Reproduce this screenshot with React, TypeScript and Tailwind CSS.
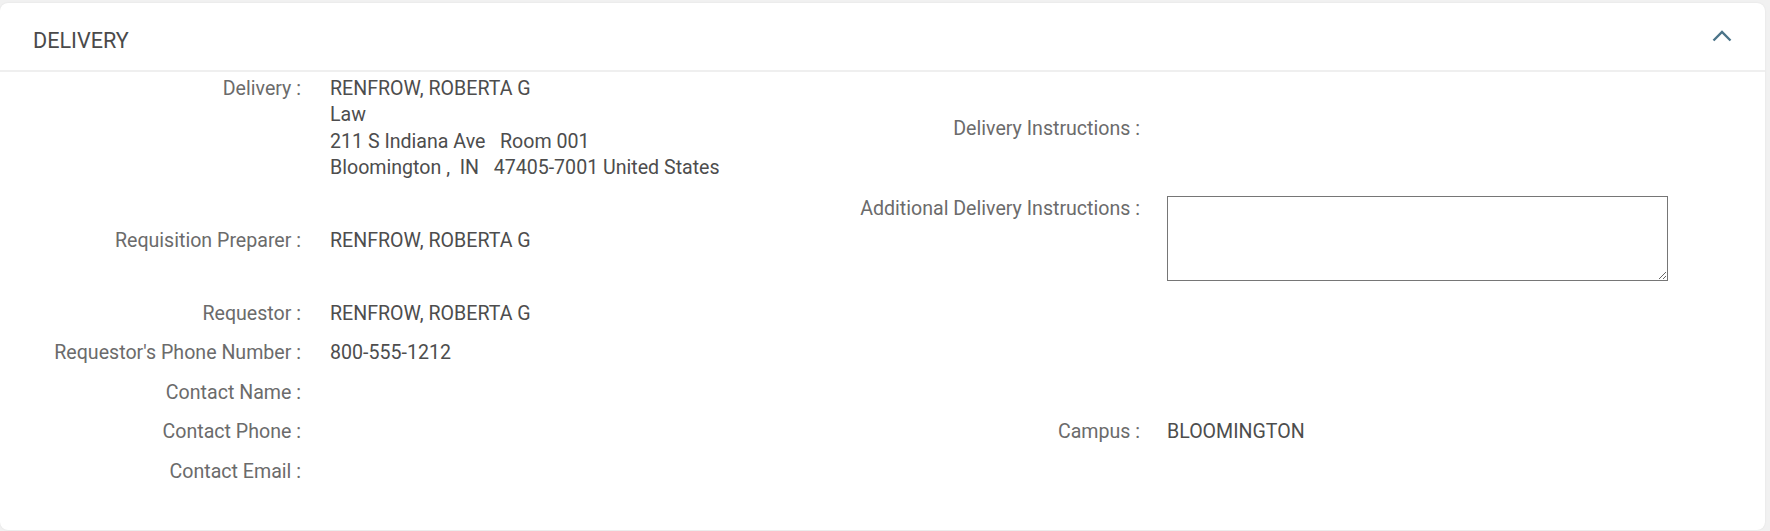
import React from "react";

const font = { fontFamily: "Roboto, 'Liberation Sans', sans-serif" };

function Label({ children, w }: { children?: React.ReactNode; w: string }) {
  return <div className={`${w} shrink-0 text-right text-[#6b6b6b]`}>{children}</div>;
}

export default function App() {
  return (
    <div
      className="w-[1770px] h-[531px] bg-[#f1f1f1] pt-[3px] pr-[5px] pb-[1px] overflow-hidden"
      style={font}
    >
      <div className="h-full bg-white rounded-[8px] shadow-[0_0_2px_rgba(0,0,0,0.08)] text-[19.6px] leading-[26.4px]">
        {/* header */}
        <div className="h-[69px] flex items-start justify-between border-b-2 border-[#efefef]">
          <div className="pt-[25px] pl-[33px] text-[21.6px] leading-[26px] text-[#4a4a4a]">DELIVERY</div>
          <div className="pt-[27px] pr-[33px]">
            <svg width="20" height="12" viewBox="0 0 20 12" fill="none">
              <path d="M1.5 10.5 L10 2 L18.5 10.5" stroke="#4b7489" strokeWidth="2.4" />
            </svg>
          </div>
        </div>

        {/* row 1 */}
        <div className="flex h-[116px] pt-[4px]">
          <div className="w-[838px] flex">
            <Label w="w-[301px]">Delivery :</Label>
            <div className="pl-[29px] text-[#4d4d4d]">
              <div>RENFROW, ROBERTA G</div>
              <div>Law</div>
              <div className="whitespace-pre">211 S Indiana Ave   Room 001</div>
              <div className="whitespace-pre">Bloomington ,  IN   47405-7001 United States</div>
            </div>
          </div>
          <div className="flex items-center h-[106px]">
            <Label w="w-[302px]">Delivery Instructions :</Label>
          </div>
        </div>

        {/* row 2 */}
        <div className="flex h-[106px]">
          <div className="w-[838px] flex items-center">
            <Label w="w-[301px]">Requisition Preparer :</Label>
            <div className="pl-[29px] text-[#4d4d4d]">RENFROW, ROBERTA G</div>
          </div>
          <div className="flex pt-[8px]">
            <Label w="w-[302px]">Additional Delivery Instructions :</Label>
            <textarea className="ml-[27px] w-[501px] h-[85px] border border-[#767676] bg-white outline-none" />
          </div>
        </div>

        {/* simple rows */}
        {[
          ["Requestor :", "RENFROW, ROBERTA G", "", ""],
          ["Requestor's Phone Number :", "800-555-1212", "", ""],
          ["Contact Name :", "", "", ""],
          ["Contact Phone :", "", "Campus :", "BLOOMINGTON"],
          ["Contact Email :", "", "", ""],
        ].map(([l, v, rl, rv], i) => (
          <div key={i} className="flex h-[39.5px] items-center">
            <div className="w-[838px] flex">
              <Label w="w-[301px]">{l}</Label>
              <div className="pl-[29px] text-[#4d4d4d]">{v}</div>
            </div>
            {rl ? (
              <div className="flex">
                <Label w="w-[302px]">{rl}</Label>
                <div className="pl-[27px] text-[#4d4d4d]">{rv}</div>
              </div>
            ) : null}
          </div>
        ))}
      </div>
    </div>
  );
}
